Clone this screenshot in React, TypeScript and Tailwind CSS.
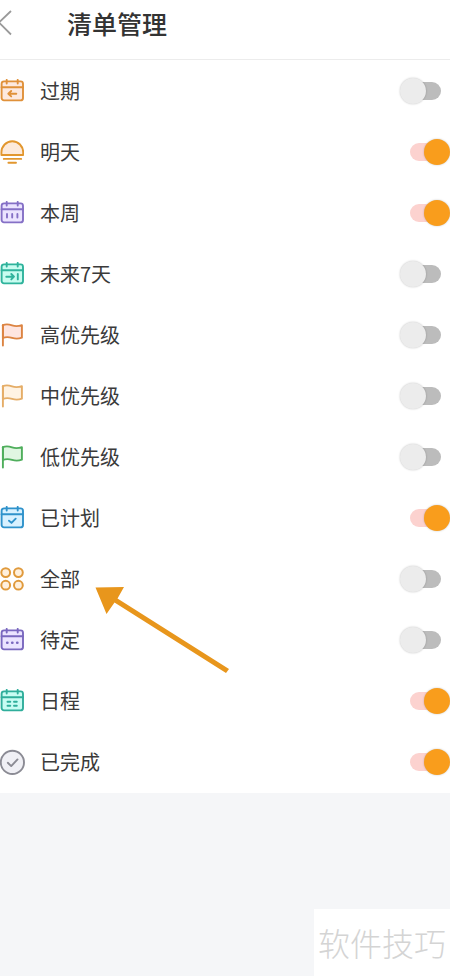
import type { ReactNode } from 'react'

type Item = {
    id: string
    label: string
    icon: ReactNode
    enabled?: boolean
}

function CalendarGlyph({
    stroke,
    fill,
    children,
}: {
    stroke: string
    fill: string
    children: ReactNode
}) {
    return (
        <svg
            viewBox="0 0 24 24"
            className="h-6 w-6"
            fill="none"
            stroke={stroke}
            strokeWidth="1.9"
            strokeLinecap="round"
            strokeLinejoin="round"
        >
            <rect x="1.6" y="2.4" width="21.4" height="19" rx="2.4" fill={fill} />
            <path d="M1.600 8.200h21.400" />
            <path d="M6.700 0.900v3.600M17.700 0.900v3.600" />
            {children}
        </svg>
    )
}

function FlagGlyph({ stroke, fill }: { stroke: string; fill: string }) {
    return (
        <svg
            viewBox="0 0 24 24"
            className="h-6 w-6"
            fill="none"
            stroke={stroke}
            strokeWidth="1.9"
            strokeLinecap="round"
            strokeLinejoin="round"
        >
            <path
                d="M2.900 2.200c3-1.400 6-1 9.200.2 3.200 1.200 6.200 1 9.800-.2v12.500c-3.400 1.200-6.600 1.200-9.800.2-3.200-1-6.200-1.200-9.200.1z"
                fill={fill}
            />
            <path d="M2.900 2.200v20.400" />
        </svg>
    )
}

function SunsetGlyph() {
    return (
        <svg
            viewBox="0 0 24 24"
            className="h-6 w-6"
            fill="none"
            stroke="#e2972f"
            strokeWidth="1.9"
            strokeLinecap="round"
            strokeLinejoin="round"
        >
            <path d="M1.400 15v-2.500a10.900 11.300 0 0 1 21.800 0V15z" fill="#fdeadb" />
            <path d="M3.800 18.900h17.400M8.400 22.700h7.600" />
        </svg>
    )
}

function CirclesGlyph() {
    return (
        <svg
            viewBox="0 0 24 24"
            className="h-6 w-6"
            fill="#fff0dd"
            stroke="#e09a3c"
            strokeWidth="2"
        >
            <circle cx="5.700" cy="5.600" r="4.400" />
            <circle cx="18.400" cy="5.600" r="4.400" />
            <circle cx="5.700" cy="18.200" r="4.400" />
            <circle cx="18.400" cy="18.200" r="4.400" />
        </svg>
    )
}

function DoneGlyph() {
    return (
        <svg
            viewBox="0 0 24 24"
            className="h-6 w-6 overflow-visible"
            fill="none"
            stroke="#8b8b94"
            strokeWidth="1.900"
            strokeLinecap="round"
            strokeLinejoin="round"
        >
            <circle cx="12.400" cy="12.400" r="11.600" fill="#f0f0f5" />
            <path d="M7.800 12.800l3.400 3.300 6.300-6.700" />
        </svg>
    )
}

function PointerArrow() {
    return (
        <svg
            viewBox="0 0 134 86"
            className="pointer-events-none absolute top-[39px] left-[95px] z-10 h-[86px] w-[134px]"
            fill="#e8961c"
            aria-hidden="true"
        >
            <path d="M0.500 0.500L29 0L22.500 11.500L134 82L131 86L19.500 15.500L11.500 27z" />
        </svg>
    )
}

const items: Item[] = [
    {
        id: 'overdue',
        label: '过期',
        icon: (
            <CalendarGlyph stroke="#e0913a" fill="#fde9df">
                <path d="M8.300 14.700h8M11.200 12l-2.900 2.700 2.900 2.700" />
            </CalendarGlyph>
        ),
    },
    { id: 'tomorrow', label: '明天', icon: <SunsetGlyph />, enabled: true },
    {
        id: 'week',
        label: '本周',
        icon: (
            <CalendarGlyph stroke="#8570c6" fill="#ebe4ff">
                <path d="M7 13v3.600M12.200 13v3.600M17.400 13v3.600" />
            </CalendarGlyph>
        ),
        enabled: true,
    },
    {
        id: 'next7',
        label: '未来7天',
        icon: (
            <CalendarGlyph stroke="#2fb39c" fill="#c8fcf0">
                <path d="M6.300 14.700h7.500M11.300 12l2.700 2.700-2.700 2.700M17.800 12v5.400" />
            </CalendarGlyph>
        ),
    },
    {
        id: 'high',
        label: '高优先级',
        icon: <FlagGlyph stroke="#dc8442" fill="#fee5e0" />,
    },
    {
        id: 'medium',
        label: '中优先级',
        icon: <FlagGlyph stroke="#e5ad67" fill="#fff3e3" />,
    },
    {
        id: 'low',
        label: '低优先级',
        icon: <FlagGlyph stroke="#4fae5c" fill="#e0f6e2" />,
    },
    {
        id: 'planned',
        label: '已计划',
        icon: (
            <CalendarGlyph stroke="#2f92cb" fill="#d8f1ff">
                <path d="M9 14.700l2.500 2.200 4.200-4.200" />
            </CalendarGlyph>
        ),
        enabled: true,
    },
    { id: 'all', label: '全部', icon: <CirclesGlyph /> },
    {
        id: 'pending',
        label: '待定',
        icon: (
            <CalendarGlyph stroke="#7a68bf" fill="#ebe4ff">
                <path d="M7.200 14.700h.2M12.200 14.700h.2M17.200 14.700h.2" strokeWidth="2.600" />
            </CalendarGlyph>
        ),
    },
    {
        id: 'schedule',
        label: '日程',
        icon: (
            <CalendarGlyph stroke="#2fae9b" fill="#c8fcf3">
                <path d="M7.500 12.800h2.800M14 12.800h2.800M7.500 16.800h2.800M14 16.800h2.800" />
            </CalendarGlyph>
        ),
        enabled: true,
    },
    { id: 'done', label: '已完成', icon: <DoneGlyph />, enabled: true },
]

function ListRow({ item }: { item: Item }) {
    return (
        <li className="relative flex h-[61px] items-center">
            {item.icon}
            <label
                htmlFor={item.id}
                className="ml-4 flex-1 text-[20px] leading-7 text-[#3a3a3a]"
            >
                {item.label}
            </label>
            <input
                id={item.id}
                type="checkbox"
                defaultChecked={item.enabled}
                className="relative h-[26px] w-[50px] cursor-pointer appearance-none before:absolute before:top-1 before:left-[10px] before:h-[18px] before:w-[31px] before:rounded-full before:bg-[#bcbcbc] after:absolute after:top-0 after:left-0 after:h-[26px] after:w-[26px] after:rounded-full after:bg-[#ececec] after:shadow-[0_0_2px_rgba(0,0,0,0.25)] checked:before:bg-[#fcd2cf] checked:after:left-6 checked:after:bg-[#f99d1c]"
            />
            {item.id === 'all' && <PointerArrow />}
        </li>
    )
}

export default function App() {
    return (
        <div className="flex min-h-screen flex-col overflow-x-hidden bg-[#f5f6f8] font-['Noto_Sans_CJK_SC','Noto_Sans',sans-serif]">
            <header className="flex h-[60px] items-start border-b border-[#ececec] bg-white pt-[3px]">
                <button type="button" aria-label="返回" className="h-10 w-[67px]">
                    <svg
                        viewBox="0 0 12 26"
                        className="h-[26px] w-3"
                        fill="none"
                        stroke="#9a9a9a"
                        strokeWidth="1.800"
                    >
                        <path d="M11 1L-1 12.500L11 24.500" />
                    </svg>
                </button>
                <h1 className="text-[25px] leading-10 font-medium text-[#333]">
                    清单管理
                </h1>
            </header>
            <ul className="bg-white pb-px">
                {items.map((item) => (
                    <ListRow key={item.id} item={item} />
                ))}
            </ul>
            <footer className="mt-auto self-end bg-white px-1 py-3 text-[32px] leading-[43px] font-light text-[#d4d4d4]">
                软件技巧
            </footer>
        </div>
    )
}
